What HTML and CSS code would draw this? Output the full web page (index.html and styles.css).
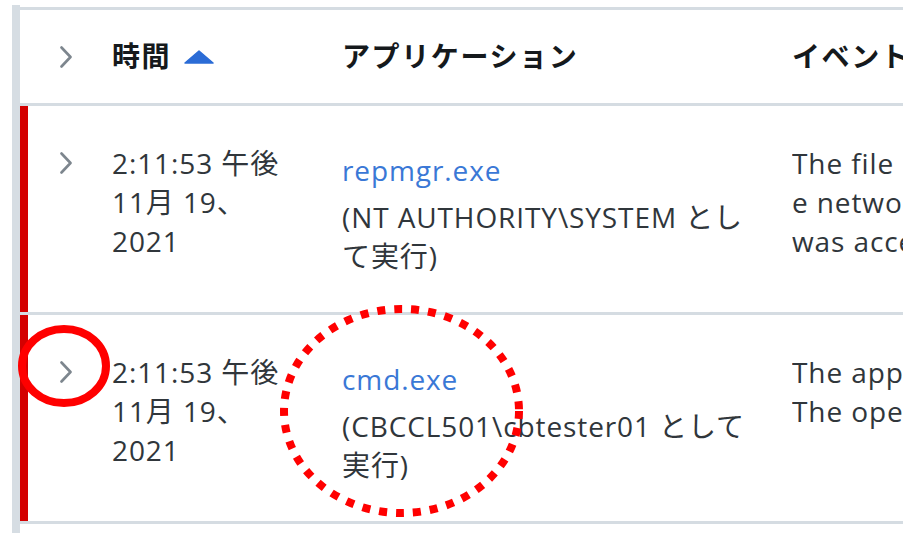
FILE: index.html
```html
<!DOCTYPE html>
<html lang="ja">
<head>
<meta charset="utf-8">
<title>イベント</title>
<link rel="stylesheet" href="styles.css">
</head>
<body>
<div class="page">
  <div class="frame">
    <div class="table">
      <div class="row head">
        <div class="cell chev">
          <svg class="chevron" width="12" height="22" viewBox="0 0 12 22"><polyline points="1.5,1.5 10.5,11 1.5,20.5"/></svg>
        </div>
        <div class="cell time"><span>時間</span><svg class="sort" width="30" height="14" viewBox="0 0 30 14"><polygon points="15,1 29,13 1,13"/></svg></div>
        <div class="cell app">アプリケーション</div>
        <div class="cell event">イベント</div>
      </div>
      <div class="row item">
        <div class="cell chev">
          <svg class="chevron" width="12" height="22" viewBox="0 0 12 22"><polyline points="1.5,1.5 10.5,11 1.5,20.5"/></svg>
        </div>
        <div class="cell time"><div class="txt">2:11:53 午後 11月 19、2021</div></div>
        <div class="cell app"><a href="#">repmgr.exe</a><div class="txt">(NT AUTHORITY\SYSTEM として実行)</div></div>
        <div class="cell event">
          <div class="ln">The file C:\Windows\System32\config on th</div>
          <div class="ln">e network share \\CBCCL501\admin$</div>
          <div class="ln">was accessed by the process.</div>
        </div>
      </div>
      <div class="row item">
        <div class="cell chev">
          <svg class="chevron" width="12" height="22" viewBox="0 0 12 22"><polyline points="1.5,1.5 10.5,11 1.5,20.5"/></svg>
        </div>
        <div class="cell time"><div class="txt">2:11:53 午後 11月 19、2021</div></div>
        <div class="cell app"><a href="#">cmd.exe</a><div class="txt">(CBCCL501\cbtester01 として実行)</div></div>
        <div class="cell event">
          <div class="ln">The application was started by the user.</div>
          <div class="ln">The operation was allowed.</div>
        </div>
      </div>
    </div>
  </div>
  <svg class="marks" width="923" height="533" viewBox="0 0 923 533">
    <ellipse class="ring" cx="64" cy="366" rx="42" ry="37"/>
    <ellipse class="dots" cx="401.5" cy="411" rx="117.5" ry="102"/>
  </svg>
</div>
</body>
</html>
```
FILE: styles.css
```css
html, body {
  margin: 0;
  padding: 0;
  background: #ffffff;
}

body {
  font-family: "Open Sans", "Noto Sans CJK JP", sans-serif;
  color: #30363b;
  overflow: hidden;
}

.page {
  position: relative;
  width: 923px;
  height: 533px;
  overflow: hidden;
}

.frame {
  margin: 5px 0 0 12px;
  border-left: 8px solid #d6dde3;
  padding-top: 2px;
  height: 526px;
  width: 883px;
}

.table {
  width: 883px;
  border-top: 3px solid #d5dce2;
  overflow: hidden;
}

.row {
  display: grid;
  grid-template-columns: 92px 230px 450px 1fr;
  border-bottom: 3px solid #d5dce2;
  font-size: 28px;
  line-height: 39px;
  letter-spacing: 0.9px;
}

.head {
  height: 93px;
  align-items: center;
  font-weight: 700;
  color: #15191c;
  letter-spacing: 1.6px;
}

.item {
  box-shadow: inset 8px 0 0 #d40000;
}

.chev {
  padding-left: 40px;
}

.chevron {
  display: block;
  fill: none;
  stroke: #7d868e;
  stroke-width: 2.6;
  stroke-linecap: round;
  stroke-linejoin: round;
}

.item .cell {
  padding: 38px 0 36px;
}

.item .chev {
  padding-left: 40px;
}

.item .chev .chevron {
  margin-top: 8px;
}

.head .time {
  display: flex;
  align-items: center;
}

.sort {
  display: block;
  margin-left: 13px;
  fill: #2b6cd6;
  stroke: #2b6cd6;
  stroke-width: 1.5;
  stroke-linejoin: round;
}

.time .txt {
  width: 180px;
}

.app .txt {
  width: 416px;
}

.app a {
  display: block;
  margin-top: 7px;
  margin-bottom: 8px;
  color: #3a78d6;
  text-decoration: none;
}

.event {
  overflow: hidden;
  white-space: nowrap;
}

.marks {
  position: absolute;
  top: 0;
  left: 0;
  pointer-events: none;
}

.ring {
  fill: none;
  stroke: #ff0000;
  stroke-width: 8;
}

.dots {
  fill: none;
  stroke: #ff0000;
  stroke-width: 8;
  stroke-dasharray: 8 9;
}
```
